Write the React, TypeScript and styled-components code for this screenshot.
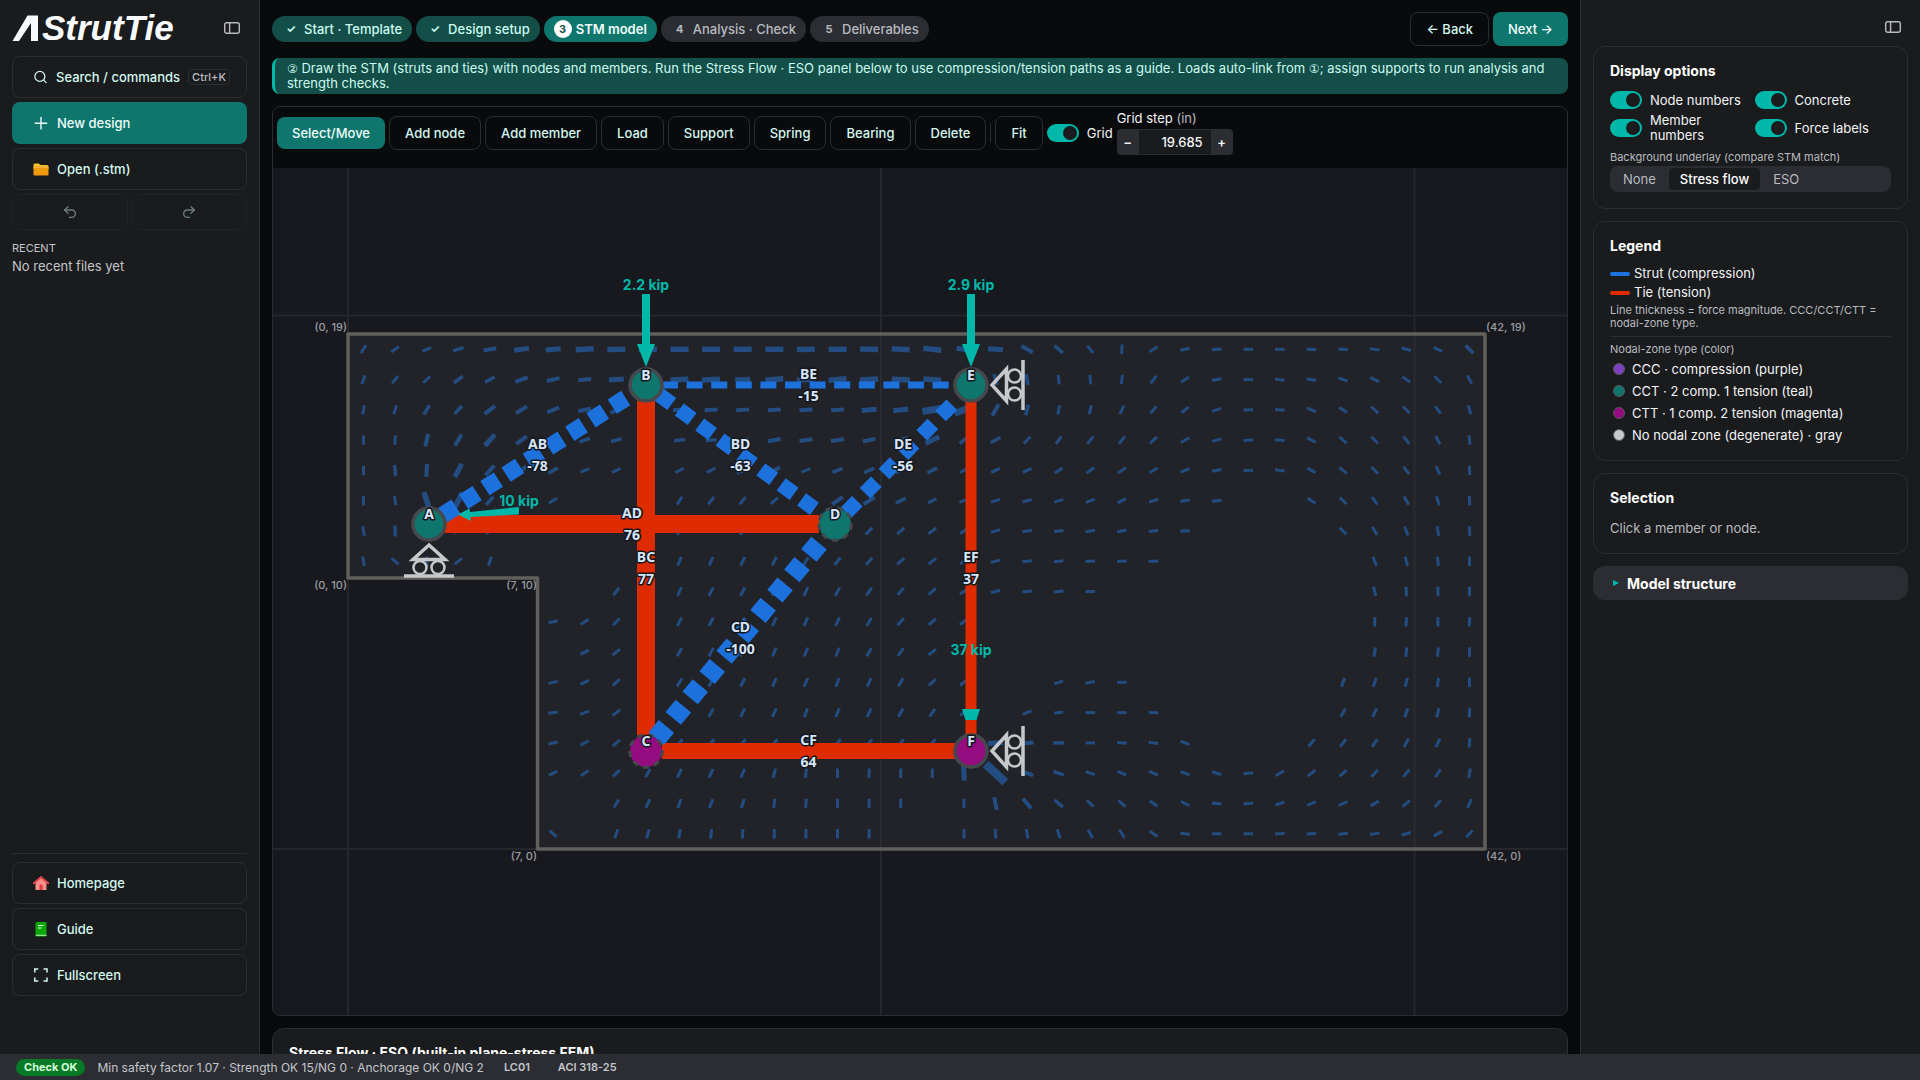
import React, { useId, useState } from "react";
import styled, { createGlobalStyle, css } from "styled-components";
import { Redo2, Search, Undo2 } from "lucide-react";

const c = {
  page: "#090a0c",
  panel: "#1a1b1d",
  line: "#2b2d31",
  raised: "#2b2d32",
  primary: "#0f766e",
  primaryDark: "#134e48",
  accent: "#00b8a9",
  mint: "#d3f8f0",
  text: "#f2f4f6",
  muted: "#b9bbc0",
  tie: "#de2c00",
  strut: "#1c71dc",
};

const GlobalStyle = createGlobalStyle`
  *, *::before, *::after { box-sizing: border-box; }
  body {
    margin: 0;
    overflow: hidden;
    background: ${c.page};
    color: ${c.text};
    font: 400 13px/15px Inter, "Liberation Sans", sans-serif;
  }
  button, input { font: inherit; color: inherit; }
  button { cursor: pointer; }
  h2, p { margin: 0; }
`;

/* ---------- shell ---------- */

const Shell = styled.div`
  display: grid;
  grid-template-columns: 260px minmax(0, 1fr) 340px;
  grid-template-rows: minmax(0, 1fr) 26px;
  height: 100vh;
`;

const Sidebar = styled.nav`
  display: flex;
  flex-direction: column;
  gap: 4px;
  padding: 0 12px 58px;
  background: ${c.panel};
  border-right: 1px solid ${c.line};
`;

const Main = styled.main`
  display: flex;
  flex-direction: column;
  gap: 12px;
  padding: 12px;
  overflow: hidden;
`;

const Inspector = styled.aside`
  display: flex;
  flex-direction: column;
  gap: 12px;
  padding: 0 12px;
  background: ${c.panel};
  border-left: 1px solid ${c.line};
`;

const StatusBar = styled.footer`
  grid-column: 1 / -1;
  display: flex;
  align-items: center;
  gap: 12px;
  padding: 0 16px;
  background: ${c.raised};
  color: #c4c6cb;
  font-size: 12px;
`;

/* ---------- shared controls ---------- */

const Button = styled.button<{ $primary?: boolean }>`
  flex: none;
  padding: 8px 15px;
  border: 1px solid ${c.line};
  border-radius: 8px;
  background: transparent;
  color: ${c.mint};
  font-weight: 500;
  line-height: 16px;
  white-space: nowrap;
  ${(p) =>
    p.$primary &&
    css`
      border: 0;
      background: ${c.primary};
      color: #f0fdfa;
    `}
`;

const SideButton = styled(Button)`
  display: flex;
  align-items: center;
  gap: 8px;
  height: 42px;
  padding: 0 16px 0 20px;
  ${(p) => p.$primary && css`padding-left: 21px;`}
`;

const HistoryButton = styled(Button)`
  display: grid;
  flex: 1;
  place-items: center;
  height: 36px;
  padding: 0;
  border-color: #222326;
  color: #6f7f7e;
`;

const IconButton = styled.button`
  display: grid;
  place-items: center;
  width: 16px;
  height: 16px;
  padding: 0;
  border: 0;
  background: none;
  color: #b8babd;
`;

const SwitchLabel = styled.label`
  display: flex;
  align-items: center;
  gap: 8px;
`;

const SwitchInput = styled.input`
  appearance: none;
  flex: none;
  width: 32px;
  height: 18px;
  margin: 0;
  padding: 2px;
  border-radius: 9px;
  background: ${c.raised};
  &::before {
    content: "";
    display: block;
    width: 14px;
    height: 14px;
    border-radius: 50%;
    background: ${c.panel};
  }
  &:checked { background: ${c.accent}; }
  &:checked::before { margin-left: 14px; }
`;

function Switch({ children }: { children: React.ReactNode }) {
  const id = useId();
  return (
    <SwitchLabel htmlFor={id}>
      <SwitchInput id={id} type="checkbox" role="switch" defaultChecked />
      <span>{children}</span>
    </SwitchLabel>
  );
}

/* ---------- sidebar ---------- */

const Brand = styled.div`
  display: flex;
  align-items: center;
  justify-content: space-between;
  height: 52px;
  padding: 4px 7px 0 0;
`;

const Logo = styled.a`
  display: flex;
  align-items: center;
  gap: 4px;
  color: #fafbfc;
  font: italic 700 35px/36px "Liberation Sans", Arial, sans-serif;
  text-decoration: none;
`;

const Kbd = styled.kbd`
  margin-left: auto;
  padding: 0 3px;
  border: 1px solid ${c.line};
  border-radius: 4px;
  color: ${c.muted};
  font: 500 11px/14px Inter, sans-serif;
`;

const Row = styled.div`
  display: flex;
  gap: 4px;
`;

const Recent = styled.section`
  display: flex;
  flex-direction: column;
  gap: 4px;
  margin-top: 7px;
  color: #c4c6c9;
`;

const RecentTitle = styled.h2`
  font-size: 11px;
  line-height: 14px;
  font-weight: 400;
  text-transform: uppercase;
`;

const SideFooter = styled.div`
  display: flex;
  flex-direction: column;
  gap: 4px;
  margin-top: auto;
  padding-top: 8px;
  border-top: 1px solid ${c.line};
`;

const PanelIcon = () => (
  <svg width="16" height="12" viewBox="0 0 16 12" fill="none" stroke="currentColor" strokeWidth="1.4" aria-hidden="true">
    <rect x=".7" y=".7" width="14.6" height="10.6" rx="2" />
    <path d="M5.6 1v10" />
  </svg>
);

const PlusIcon = () => (
  <svg width="16" height="16" fill="none" stroke="currentColor" strokeWidth="1.4" aria-hidden="true">
    <path d="M8 2v12.400M1.800 8.200h12.400" />
  </svg>
);

const FolderIcon = () => (
  <svg width="16" height="16" aria-hidden="true">
    <path d="M.5 4q0-1.500 1.500-1.500h3.500l2 1.500H14q1.500 0 1.500 1.500V8H.5z" fill="#fbc52a" />
    <rect x=".5" y="5.500" width="15" height="9" rx="1.200" fill="#ee9a0c" />
    <path d="M.7 6.200h14.600" stroke="#fdb85a" strokeWidth="1" />
  </svg>
);

const HomeIcon = () => (
  <svg width="16" height="16" aria-hidden="true">
    <path d="M2.500 7.500 8 3l5.500 4.500V15h-11z" fill="#fb8f8a" />
    <path d="M.8 8.300 8 2.200l7.200 6.100" fill="none" stroke="#e5484d" strokeWidth="2" strokeLinecap="round" />
    <rect x="6.500" y="9.500" width="3" height="5.500" fill="#d93b40" />
  </svg>
);

const BookIcon = () => (
  <svg width="16" height="16" aria-hidden="true">
    <rect x="2.500" y="1" width="11" height="14.500" rx="1" fill="#0aa80a" />
    <path d="M2.800 14.300H13.500" stroke="#b8f0b0" strokeWidth="1" />
    <path d="M5 4.500h5.500M5 7h3.500" stroke="#d9ffd5" strokeWidth="1.200" />
  </svg>
);

const FullscreenIcon = () => (
  <svg width="16" height="16" fill="none" stroke="currentColor" strokeWidth="1.500" aria-hidden="true">
    <path d="M1.800 5.500V2h3.500M10.500 2H14v3.500M14 10.500V14h-3.500M5.300 14H1.800v-3.500" />
  </svg>
);

/* ---------- header ---------- */

const Header = styled.header`
  display: flex;
  align-items: center;
  justify-content: space-between;
`;

const Steps = styled.ol`
  display: flex;
  gap: 4px;
  margin: 0;
  padding: 0;
  list-style: none;
`;

type StepState = "done" | "current" | "todo";

const Step = styled.button<{ $state: StepState }>`
  display: flex;
  align-items: center;
  gap: 4px;
  height: 26px;
  padding: 0 10px;
  border: 0;
  border-radius: 13px;
  white-space: nowrap;
  font-weight: ${(p) => (p.$state === "current" ? 600 : 500)};
  background: ${(p) => ({ done: c.primaryDark, current: c.primary, todo: c.raised })[p.$state]};
  color: ${(p) => ({ done: "#ccfbf1", current: "#f0fdfa", todo: c.muted })[p.$state]};
`;

const StepMark = styled.span<{ $state: StepState }>`
  display: grid;
  place-items: center;
  width: 18px;
  height: 18px;
  border-radius: 50%;
  font-size: 11px;
  font-weight: 700;
  ${(p) => p.$state === "current" && css`background: #fff; color: ${c.primaryDark};`}
`;

const Notice = styled.p`
  padding: 3px 12px;
  border-left: 3px solid ${c.accent};
  border-radius: 8px;
  background: ${c.primaryDark};
  color: #ccfbf1;
`;

const Circled = styled.span`
  font-family: "DejaVu Sans", sans-serif;
  font-size: 12px;
  line-height: 12px;
`;

/* ---------- editor ---------- */

const Editor = styled.section`
  flex: none;
  overflow: hidden;
  border: 1px solid ${c.line};
  border-radius: 8px;
`;

const Toolbar = styled.div`
  display: flex;
  align-items: center;
  gap: 4px;
  padding: 4px 4px 13px;
`;

const Divider = styled.span`
  width: 1px;
  height: 20px;
  background: ${c.line};
`;

const Field = styled.div`
  display: flex;
  flex-direction: column;
  gap: 3px;
`;

const Unit = styled.span`
  color: ${c.muted};
`;

const Stepper = styled.div`
  display: flex;
  height: 26px;
  padding: 1px 0;
  border-radius: 4px;
  background: ${c.raised};
`;

const StepperButton = styled.button`
  width: 22px;
  padding: 0;
  border: 0;
  background: none;
  font-weight: 600;
`;

const StepperInput = styled.input`
  width: 72px;
  padding: 0 8px;
  border: 0;
  background: ${c.panel};
  text-align: right;
  font-weight: 500;
`;

const Canvas = styled.svg`
  display: block;
  width: 100%;
  height: auto;
  background: #18191e;
  font-family: Inter, "Liberation Sans", sans-serif;
`;

const Halo = styled.text`
  fill: #d6e6fb;
  stroke: #14161c;
  stroke-width: 3px;
  stroke-linejoin: round;
  paint-order: stroke;
  font: 700 14px "Noto Sans", sans-serif;
  text-anchor: middle;
`;

const Corner = styled.text`
  fill: #9b9da1;
  font-size: 11px;
  font-weight: 500;
`;

const LoadText = styled.text`
  fill: ${c.accent};
  font-size: 14px;
  font-weight: 700;
  text-anchor: middle;
`;

/* Principal stress directions, one line per mesh row: angle in degrees, then a
   letter for the magnitude class; "." marks a cell below the threshold. */
const FLOW = [
  "58 35 22 17a 10b 7c 5c 3d 1d 0d 0d 0d 0d 0d 1d 0d -2d -3d -6d -8c -4c -30b -42a -50 88 32 12 4 0 0 -2 -5 -8 -15 -25 -45a",
  "70 52 42 37a 28a 20b 13b 6b 4c . 2d 2d 2c 5d 3d 5d 3d -2d -4d -60d -75a -78a -84 -85 82 52 33 12 0 -8 -7 -20 -25 -35 -45 -62",
  "80 72 60a 48a 38b 32b 22b 12b 30b . 3b 3b 3b 4b 3b 3b 5c 6c 9e 20e 60b 75a 79 76 65 48 38 18 2 -4 -25 -33 -42 -45 -52 -75",
  "90 87 76b 60b 48c 36b 25b 18a 15a . 7a 5a 8b 10b 8b 8b 12b 14c 27c 40a 28a 45 54 52 50 42 30 15 3 -4 -28 -42 -45 -52 -62 -85",
  "90 -84a 87b 62c 48b 40b 30a 20 25 . 27 28 25b 30b 22 22a 25a 25a 28a 30 25 25 32 35 35 30 22 10 0 -8 -28 -38 -45 -52 -65 -87",
  "-89 -82 -72d 62d 48a . 30 . . . 55 52 50 42 42 35b 32b 28a 27 22 17 15 17 20 27 18 10 6 . . -32 -45 -55 -60 -72 -87",
  "-80 -88a . 20 35 5 . . . . 60 . 60 . . . 45 42 38 35 17 10 5 10 10 5 2 . . . . -45 -60 -70 -80 -87",
  "-80 -40 90 38 72 . . . . . 65 65 62 62 60 52 48 42 38 35 14 5 5 3 3 2 . . . . . . -68 -76 -84 90",
  ". . . . . . . . 52 . 65 62 62 60 65 62 55 48 42 35 15 6 6 1 . . . . . . . . -76 -86 90 90",
  ". . . . . . 12 33 48 . 62 62 62 66 66 66 60 48 40 35 . . . . . . . . . . . . 90 85 90 88",
  ". . . . . . . 28 40 . 60 62 62 68 68 68 60 55 38 . . . . . . . . . . . . . 80 84 82 90",
  ". . . . . . 12 26 44 . 58 60 62 66 68 70 66 60 42 38 . . 18 10 2 . . . . . . 70 72 76 82 90",
  ". . . . . . 8 20 38 . 60 62 62 66 70 66 66 60 55 36 . 22 8 0 0 -2 . . . . . 60 62 70 75 88",
  ". . . . . . 12 27 42 . 50 50 50 50 50 50 50 50 50 . 4c 4b 0a 0 -5 -8 -22 . . . 50 52 55 60 62 85",
  ". . . . . . 27 34 45 60 64 64 66 75 84 90 88 88 90 -87c -43f -20b -17a -18 -22 -22 -20 -18 2 30 38 42 48 50 58 80",
  ". . . . . . . . 60 64 70 68 74 82 86 90 90 88 . 90 -78b -50b -40a -42 -42 -35 -28 -5 5 18 25 25 30 40 50 65",
  ". . . . . . -42 . 70 74 80 85 88 90 90 90 90 . . 90 -87 -80 -72 -60 -58 -35 -5 0 0 2 2 5 8 15 30 48",
];

const MAGNITUDE: Record<string, [number, number]> = {
  "": [9.5, 3],
  a: [11, 3.5],
  b: [13, 4],
  c: [15, 5],
  d: [18, 5.5],
  e: [20, 7],
  f: [27, 8.500],
};

function StressFlow() {
  return (
    <g fill="#234c81">
      {FLOW.flatMap((row, j) =>
        row.split(" ").map((cell, i) => {
          if (cell === ".") return null;
          const [length, width] = MAGNITUDE[cell.replace(/[-\d]/g, "")];
          return (
            <rect
              key={`${i}-${j}`}
              x={-length / 2}
              y={-width / 2}
              width={length}
              height={width}
              transform={`translate(${363.5 + 31.6 * i} ${349.3 + 30.28 * j}) rotate(${-parseInt(cell, 10)})`}
            />
          );
        })
      )}
    </g>
  );
}

type NodeId = "A" | "B" | "C" | "D" | "E" | "F";

const NODES: Record<NodeId, { x: number; y: number; fill: string; free?: boolean }> = {
  A: { x: 429, y: 524, fill: c.primary },
  B: { x: 646, y: 385, fill: c.primary },
  C: { x: 646, y: 751, fill: "#950c80", free: true },
  D: { x: 835, y: 524, fill: c.primary, free: true },
  E: { x: 971, y: 385, fill: c.primary },
  F: { x: 971, y: 751, fill: "#950c80" },
};

const MEMBERS: { id: string; force: number; width: number; pitch?: number }[] = [
  { id: "BC", force: 77, width: 18 },
  { id: "AD", force: 76, width: 18 },
  { id: "CF", force: 64, width: 16 },
  { id: "EF", force: 37, width: 11 },
  { id: "AB", force: -78, width: 17, pitch: 25.2 },
  { id: "BD", force: -63, width: 15, pitch: 25.3 },
  { id: "BE", force: -15, width: 7, pitch: 24.6 },
  { id: "CD", force: -100, width: 20, pitch: 26.5 },
  { id: "DE", force: -56, width: 15, pitch: 27 },
];

const ends = (id: string) => [NODES[id[0] as NodeId], NODES[id[1] as NodeId]];

function Member({ id, width, pitch }: (typeof MEMBERS)[number]) {
  const [a, b] = ends(id);
  const length = Math.hypot(b.x - a.x, b.y - a.y);
  const ux = (b.x - a.x) / length;
  const uy = (b.y - a.y) / length;
  const trim = 16;
  return (
    <line
      x1={a.x + ux * trim}
      y1={a.y + uy * trim}
      x2={b.x - ux * trim}
      y2={b.y - uy * trim}
      stroke={pitch ? c.strut : c.tie}
      strokeWidth={width}
      strokeDasharray={pitch ? `16 ${pitch - 16}` : undefined}
    />
  );
}

function Support({ x, y, turn = 0 }: { x: number; y: number; turn?: number }) {
  return (
    <g transform={`translate(${x} ${y}) rotate(${turn})`} fill="none" stroke="#c6c8cc" strokeWidth="3.500">
      <path d="M0 21 16 35.500H-16Z" />
      <circle cx="-9" cy="43.500" r="6.500" strokeWidth="2.500" />
      <circle cx="9" cy="43.500" r="6.500" strokeWidth="2.500" />
      <path d="M-25 52H25" />
    </g>
  );
}

function Model() {
  return (
    <Canvas viewBox="273 168 1294 847" role="img" aria-label="Strut-and-tie model">
      <g stroke="#25272c" strokeWidth="2">
        <path d="M348 168V1015M881 168V1015M1414.500 168V1015M273 315.500H1567M273 849H1567" />
      </g>
      <path d="M348 334H1485V849H537.500V578H348Z" fill="#222328" />
      <path d="M881 334V849M1414.500 334V849" stroke="#2a2c31" strokeWidth="2" />
      <StressFlow />
      <path d="M348 334H1485V849H537.500V578H348Z" fill="none" stroke="#62605d" strokeWidth="3.500" strokeLinejoin="round" />
      <Corner x="347" y="331" textAnchor="end">(0, 19)</Corner>
      <Corner x="347" y="589" textAnchor="end">(0, 10)</Corner>
      <Corner x="537" y="589" textAnchor="end">(7, 10)</Corner>
      <Corner x="537" y="860" textAnchor="end">(7, 0)</Corner>
      <Corner x="1486" y="331">(42, 19)</Corner>
      <Corner x="1486" y="860">(42, 0)</Corner>
      {MEMBERS.map((m) => <Member key={m.id} {...m} />)}
      <Support x={429} y={524} />
      <Support x={971} y={385} turn={-90} />
      <Support x={971} y={751} turn={-90} />
      {Object.entries(NODES).map(([id, n]) => (
        <g key={id}>
          <circle cx={n.x} cy={n.y} r="16" fill={n.fill} stroke="#45494d" strokeWidth="3.500" strokeDasharray={n.free ? "6 5" : undefined} />
          {n.free && <circle cx={n.x} cy={n.y} r="14.700" fill={n.fill} />}
        </g>
      ))}
      <g fill={c.accent}>
        <path d="M642 294h8v50h5L646 367l-9-23h5Z" />
        <path d="M967 294h8v50h5L971 367l-9-23h5Z" />
        <path d="M458 514.500 469.500 508.500 470 512 519 507V514.500L470.500 517 471 521Z" />
        <path d="M962 709h18l-3.500 11h-11Z" />
      </g>
      <LoadText x="646" y="290">2.2 kip</LoadText>
      <LoadText x="971" y="290">2.9 kip</LoadText>
      <LoadText x="519" y="506">10 kip</LoadText>
      <LoadText x="971" y="655">37 kip</LoadText>
      {MEMBERS.map(({ id, force }) => {
        const [a, b] = ends(id);
        const x = (a.x + b.x) / 2;
        const y = (a.y + b.y) / 2;
        return (
          <g key={id}>
            <Halo x={x} y={y - 6}>{id}</Halo>
            <Halo x={x} y={y + 16}>{force}</Halo>
          </g>
        );
      })}
      {Object.entries(NODES).map(([id, n]) => <Halo key={id} x={n.x} y={n.y - 5}>{id}</Halo>)}
    </Canvas>
  );
}

/* ---------- cards ---------- */

const Card = styled.section`
  flex: none;
  padding: 16px;
  border: 1px solid ${c.line};
  border-radius: 12px;
  background: ${c.panel};
`;

const CardTitle = styled.h2`
  margin-bottom: 12px;
  font-size: 14px;
  line-height: 16px;
  font-weight: 700;
  color: #fff;
`;

const InspectorTop = styled.div`
  display: flex;
  justify-content: flex-end;
  height: 34px;
  padding: 19px 7px 0 0;
`;

const SwitchGrid = styled.div`
  display: grid;
  grid-template-columns: 1fr 1fr;
  gap: 4px 8px;
`;

const Caption = styled.p`
  color: ${c.muted};
  font-size: 11px;
  line-height: 13px;
`;

const Underlay = styled.fieldset`
  margin: 8px 0 0;
  padding: 0;
  border: 0;
  color: ${c.muted};
`;

const UnderlayTitle = styled.legend`
  margin-bottom: 2px;
  padding: 0;
  font-size: 11px;
  line-height: 13px;
`;

const Segments = styled.div`
  display: flex;
  gap: 2px;
  height: 26px;
  padding: 2px;
  border-radius: 8px;
  background: ${c.raised};
`;

const Segment = styled.button<{ $on: boolean }>`
  padding: 0 11px;
  border: 0;
  border-radius: 4px;
  background: ${(p) => (p.$on ? c.panel : "transparent")};
  color: ${(p) => (p.$on ? "#fff" : c.muted)};
  font-weight: ${(p) => (p.$on ? 500 : 400)};
`;

const KeyList = styled.ul<{ $row: number }>`
  display: grid;
  grid-auto-rows: ${(p) => p.$row}px;
  gap: 4px;
  margin: 0;
  padding: 0;
  list-style: none;
`;

const KeyItem = styled.li`
  display: flex;
  align-items: center;
  gap: 4px;
`;

const LineKey = styled.span<{ $color: string }>`
  width: 20px;
  height: 4px;
  border-radius: 2px;
  background: ${(p) => p.$color};
`;

const DotKey = styled.span<{ $color: string }>`
  width: 12px;
  height: 12px;
  margin: 0 3px;
  border: 1px solid #55585d;
  border-radius: 50%;
  background: ${(p) => p.$color};
`;

const LegendNotes = styled.div`
  display: grid;
  gap: 6px;
  margin: 4px 0;
`;

const Rule = styled.hr`
  width: 100%;
  height: 1px;
  margin: 0;
  border: 0;
  background: ${c.line};
`;

const Hint = styled.p`
  padding: 2px 0 1px;
  line-height: 16px;
  color: ${c.muted};
`;

const Details = styled.details`
  border-radius: 12px;
  background: ${c.raised};
`;

const Summary = styled.summary`
  display: flex;
  align-items: center;
  gap: 8px;
  height: 34px;
  padding: 0 20px;
  color: #fff;
  font-size: 14px;
  font-weight: 700;
  list-style: none;
`;

const Marker = styled.span`
  border: 3px solid transparent;
  border-left: 6px solid ${c.accent};
  border-right: 0;
`;

const Badge = styled.span`
  padding: 0 8px;
  border-radius: 9px;
  background: #067a26;
  color: #d6ffd9;
  font-size: 11px;
  line-height: 17px;
  font-weight: 700;
`;

const StatusTag = styled.span`
  padding: 0 8px;
  font-size: 11px;
  font-weight: 600;
`;

const STEPS: { label: string; state: StepState }[] = [
  { label: "Start · Template", state: "done" },
  { label: "Design setup", state: "done" },
  { label: "STM model", state: "current" },
  { label: "Analysis · Check", state: "todo" },
  { label: "Deliverables", state: "todo" },
];

const TOOLS = ["Select/Move", "Add node", "Add member", "Load", "Support", "Spring", "Bearing", "Delete"];

const ZONES = [
  { color: "#7d40c0", label: "CCC · compression (purple)" },
  { color: "#0f766e", label: "CCT · 2 comp. 1 tension (teal)" },
  { color: "#950c80", label: "CTT · 1 comp. 2 tension (magenta)" },
  { color: "#c6c8cc", label: "No nodal zone (degenerate) · gray" },
];

export default function App() {
  const [tool, setTool] = useState("Select/Move");
  const [underlay, setUnderlay] = useState("Stress flow");
  const [gridStep, setGridStep] = useState("19.685");
  const nudge = (by: number) => setGridStep((Number(gridStep) + by).toFixed(3));

  return (
    <>
      <GlobalStyle />
      <Shell>
        <Sidebar>
          <Brand>
            <Logo href="#home">
              <svg width="26" height="26" viewBox="0 0 26 26" fill="currentColor" aria-hidden="true">
                <path d="M.5 26 15.500 .5H26V26H19V8L7 26Z" />
              </svg>
              StrutTie
            </Logo>
            <IconButton aria-label="Collapse sidebar"><PanelIcon /></IconButton>
          </Brand>
          <SideButton>
            <Search size={16} strokeWidth={2} />
            Search / commands
            <Kbd>Ctrl+K</Kbd>
          </SideButton>
          <SideButton $primary><PlusIcon />New design</SideButton>
          <SideButton><FolderIcon />Open (.stm)</SideButton>
          <Row>
            <HistoryButton aria-label="Undo"><Undo2 size={16} /></HistoryButton>
            <HistoryButton aria-label="Redo"><Redo2 size={16} /></HistoryButton>
          </Row>
          <Recent>
            <RecentTitle>Recent</RecentTitle>
            <p>No recent files yet</p>
          </Recent>
          <SideFooter>
            <SideButton><HomeIcon />Homepage</SideButton>
            <SideButton><BookIcon />Guide</SideButton>
            <SideButton><FullscreenIcon />Fullscreen</SideButton>
          </SideFooter>
        </Sidebar>

        <Main>
          <Header>
            <Steps>
              {STEPS.map(({ label, state }, i) => (
                <li key={label}>
                  <Step $state={state}>
                    <StepMark $state={state}>{state === "done" ? "✓" : i + 1}</StepMark>
                    {label}
                  </Step>
                </li>
              ))}
            </Steps>
            <Row>
              <Button>← Back</Button>
              <Button $primary>Next →</Button>
            </Row>
          </Header>
          <Notice>
            <Circled>②</Circled> Draw the STM (struts and ties) with nodes and members. Run the Stress Flow · ESO panel
            below to use compression/tension paths as a guide. Loads auto-link from <Circled>①</Circled>; assign
            supports to run analysis and strength checks.
          </Notice>
          <Editor>
            <Toolbar>
              {TOOLS.map((t) => (
                <Button key={t} $primary={t === tool} onClick={() => setTool(t)}>{t}</Button>
              ))}
              <Divider />
              <Button>Fit</Button>
              <Switch>Grid</Switch>
              <Field>
                <label htmlFor="grid-step">Grid step <Unit>(in)</Unit></label>
                <Stepper>
                  <StepperButton aria-label="Decrease" onClick={() => nudge(-1)}>−</StepperButton>
                  <StepperInput id="grid-step" value={gridStep} onChange={(e) => setGridStep(e.target.value)} />
                  <StepperButton aria-label="Increase" onClick={() => nudge(1)}>+</StepperButton>
                </Stepper>
              </Field>
            </Toolbar>
            <Model />
          </Editor>
          <Card>
            <CardTitle>Stress Flow · ESO (built-in plane-stress FEM)</CardTitle>
          </Card>
        </Main>

        <Inspector>
          <InspectorTop>
            <IconButton aria-label="Collapse panel"><PanelIcon /></IconButton>
          </InspectorTop>
          <Card>
            <CardTitle>Display options</CardTitle>
            <SwitchGrid>
              <Switch>Node numbers</Switch>
              <Switch>Concrete</Switch>
              <Switch>Member numbers</Switch>
              <Switch>Force labels</Switch>
            </SwitchGrid>
            <Underlay>
              <UnderlayTitle>Background underlay (compare STM match)</UnderlayTitle>
              <Segments>
                {["None", "Stress flow", "ESO"].map((s) => (
                  <Segment key={s} $on={s === underlay} aria-pressed={s === underlay} onClick={() => setUnderlay(s)}>
                    {s}
                  </Segment>
                ))}
              </Segments>
            </Underlay>
          </Card>
          <Card>
            <CardTitle>Legend</CardTitle>
            <KeyList $row={15}>
              <KeyItem><LineKey $color={c.strut} />Strut (compression)</KeyItem>
              <KeyItem><LineKey $color={c.tie} />Tie (tension)</KeyItem>
            </KeyList>
            <LegendNotes>
              <Caption>Line thickness = force magnitude. CCC/CCT/CTT = nodal-zone type.</Caption>
              <Rule />
              <Caption>Nodal-zone type (color)</Caption>
            </LegendNotes>
            <KeyList $row={18}>
              {ZONES.map((z) => (
                <KeyItem key={z.label}><DotKey $color={z.color} />{z.label}</KeyItem>
              ))}
            </KeyList>
          </Card>
          <Card>
            <CardTitle>Selection</CardTitle>
            <Hint>Click a member or node.</Hint>
          </Card>
          <Details>
            <Summary><Marker />Model structure</Summary>
          </Details>
        </Inspector>

        <StatusBar>
          <Badge>Check OK</Badge>
          <span>Min safety factor 1.07 · Strength OK 15/NG 0 · Anchorage OK 0/NG 2</span>
          <StatusTag>LC01</StatusTag>
          <StatusTag>ACI 318-25</StatusTag>
        </StatusBar>
      </Shell>
    </>
  );
}
